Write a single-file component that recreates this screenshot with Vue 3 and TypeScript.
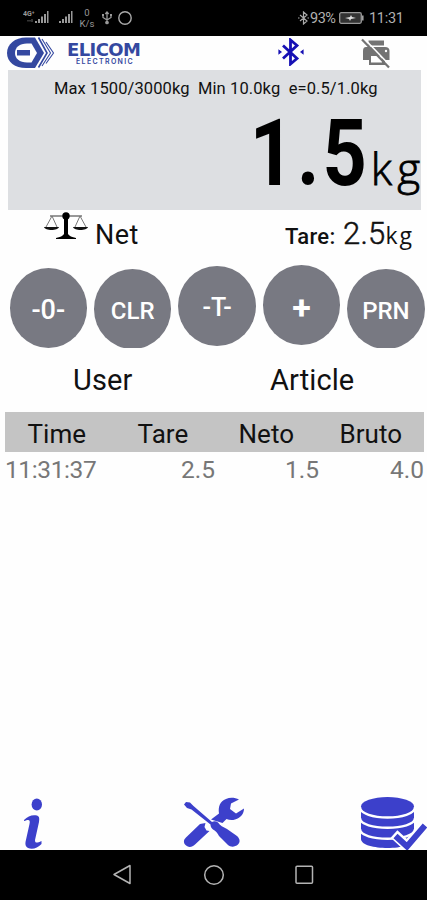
<script setup lang="ts">
interface Key { label: string; kind: string }
interface Weighing { time: string; tare: string; neto: string; bruto: string }

const keys: Key[] = [
  { label: '-0-', kind: 'zero' },
  { label: 'CLR', kind: 'clear' },
  { label: '-T-', kind: 'minus-tare' },
  { label: '+', kind: 'plus' },
  { label: 'PRN', kind: 'print' },
]
const columns: string[] = ['Time', 'Tare', 'Neto', 'Bruto']
const rows: Weighing[] = [{ time: '11:31:37', tare: '2.5', neto: '1.5', bruto: '4.0' }]
</script>

<template>
  <div class="screen">
    <div class="status">
      <svg class="signals" width="53" height="20" viewBox="0 0 53 20" fill="#999">
        <path d="M12 13h2v2h-2zM15 11h2v4h-2zM18 8.500h2V15h-2zM21 6h2v9h-2zM24 3h1.500v12H24z" />
        <path d="M36 13h2v2h-2zM39 11h2v4h-2zM42 8.500h2V15h-2zM45 6h2v9h-2zM48 3h1.500v12H48z" />
        <path d="M4 12h4v1.500H4zM8 11h2v3H8z" opacity=".35" />
        <text x="0" y="8" class="tiny">4G⁺</text>
      </svg>
      <div class="rate"><span>0</span><span>K/s</span></div>
      <svg class="usb" width="12" height="14" viewBox="0 0 12 14" fill="none" stroke="#999" stroke-width="1.300">
        <path d="M6 1v10M2 4v2.500l4 2.500 4-2.500V4M4.300 3L6 1l1.700 2" />
        <circle cx="6" cy="11.500" r="1.200" fill="#999" /><path d="M1 4h2M9 4h2" stroke-width="2" />
      </svg>
      <svg class="ring" width="16" height="16" viewBox="0 0 16 16"><circle cx="8" cy="8" r="6.200" fill="none" stroke="#aaa" stroke-width="1.400" /></svg>
      <svg class="bt-small" width="11" height="14" viewBox="0 0 11 14" fill="none" stroke="#aaa" stroke-width="1.200">
        <path d="M2 4l7 6-3.500 3V1L9 4l-7 6M0 7h1.500M9.500 7H11" />
      </svg>
      <span class="percent">93%</span>
      <svg class="battery" width="26" height="12" viewBox="0 0 26 12">
        <rect x=".7" y=".7" width="21.600" height="10.600" rx="1.500" fill="#333" stroke="#999" stroke-width="1.300" />
        <path d="M23.800 3.500v5" stroke="#aaa" stroke-width="1.500" />
        <path d="M6 6l5-1 1-2 1 2 4 1-5 1-1 2-1-2z" fill="#ddd" />
      </svg>
      <span class="clock">11:31</span>
    </div>

    <header class="brand">
      <svg class="mark" width="49" height="34" viewBox="0 0 49 34" fill="none" stroke="#3448a0">
        <path d="M28 1.500H19C8 1.500 0 8 0 17s8 15 19 15h9l9-15z" fill="#3448a0" stroke="none" />
        <path d="M24.500 7.500H20c-7.500 0-12 4-12 9.500s4.500 9.500 12 9.500h4.500L30 17z" fill="#fefefe" stroke="none" />
        <path d="M10 14h13v5.500H10z" fill="#3448a0" stroke="none" />
        <path d="M31.500 1.500L40 17l-8.500 14.500" stroke-width="1.600" />
        <path d="M35 3l8.500 14L35 30M39 6l7.500 11L39 27.500" stroke-width="1.100" />
      </svg>
      <div class="wordmark"><span class="name">ELICOM</span><span class="sub">ELECTRONIC</span></div>
      <svg class="bluetooth" width="26" height="28" viewBox="0 0 26 28" fill="none" stroke="#1610b4" stroke-width="2.800">
        <path d="M5 7.500l14 13-6.500 5.500V2L19 7.500l-14 13" /><path d="M1 12.500l2 1.500-2 1.500zM25 12.500L23 14l2 1.500z" fill="#1610b4" stroke-width="1.200" />
      </svg>
      <svg class="printer" width="32" height="32" viewBox="0 0 32 32">
        <path d="M8.500 2.500H24V7.500H8.500zM6 9h19c3 0 4.500 1.500 4.500 4v9H25v5H9v-5H3v-9c0-2.500 1-4 3-4z" fill="#737373" />
        <path d="M11 18h11v6.500H11z" fill="#fff" /><circle cx="26" cy="13" r="1.200" fill="#fff" />
        <path d="M4 .5l26 27" stroke="#fff" stroke-width="1.600" /><path d="M2 1.500l27 28" stroke="#737373" stroke-width="2.200" />
      </svg>
    </header>

    <section class="display">
      <div class="limits">Max 1500/3000kg&nbsp; Min 10.0kg&nbsp; e=0.5/1.0kg</div>
      <div class="weight"><span class="value">1.5</span><span class="unit">kg</span></div>
    </section>

    <section class="mode">
      <svg class="scales" width="44" height="28" viewBox="0 0 44 28" fill="none" stroke="#777" stroke-width="1">
        <path d="M6 4h32" stroke="#333" /><path d="M8 4L2 15M8 4l5 11M36 4l-5 11M36 4l6 11" />
        <path d="M0 15h15c-1 4-14 4-15 0zM29 15h15c-1 4-14 4-15 0z" fill="#111" stroke="none" />
        <circle cx="22" cy="4" r="3.700" fill="#000" stroke="none" />
        <path d="M20 5h4v17c1 2 4 3 8 4v1H12v-1c4-1 7-2 8-4z" fill="#000" stroke="none" />
      </svg>
      <span class="net">Net</span>
      <span class="tare-label">Tare:</span><span class="tare-value">2.5</span><span class="tare-unit">kg</span>
    </section>

    <section class="keys">
      <button v-for="key in keys" :key="key.kind" class="key" :class="key.kind">{{ key.label }}</button>
    </section>

    <section class="pickers"><span class="user">User</span><span class="article">Article</span></section>

    <div class="table-head"><span v-for="column in columns" :key="column">{{ column }}</span></div>
    <div v-for="row in rows" :key="row.time" class="record">
      <span class="time">{{ row.time }}</span><span>{{ row.tare }}</span><span>{{ row.neto }}</span><span>{{ row.bruto }}</span>
    </div>

    <footer class="tools">
      <svg class="info" width="22" height="54" viewBox="0 0 22 54" fill="#3c40cb">
        <ellipse cx="13.800" cy="8.500" rx="5.200" ry="6" />
        <path d="M1 24c4-4 8-5.500 13-4.500 2.500 1 2.500 3 2 6.500l-4 18c0 3.500 2 3 6.500 1v3c-4 4-9 6-13.500 4-2-1-3-3-2.500-6l4-18c1-4.500-.5-5-5.500-3z" />
      </svg>
      <svg class="repair" width="64" height="54" viewBox="0 0 64 54" fill="#3c40cb">
        <path d="M1 8.500L3 6l4 .5L10.500 10 29 26c2-1 4-1 6 .5 2 3 5 4.500 9 6.500l10 7c3 3 3.500 6 1 8.500-3 2.500-7 3-10 .5L36 40c-1.500-3-3-5-6-6.500-2-2-2.500-3-2.500-5L8.500 13.500 4 12z" />
        <path d="M22.500 27l-1 4 2 3.500 3 .5L12 48.500c-3 3-7 3.500-10 0-2-3-1-5.500 2-8L17 28z" />
        <path d="M28 23.500l8-6c-1-7 1-12 7-14.500 4-2 9-1.500 13 .5l-8 4-1 5.500 6 4.500 8-5c0 5-3 9-9 11-3 1-6 .5-8.500-.5l-4 4z" />
      </svg>
      <svg class="database" width="68" height="54" viewBox="0 0 68 54">
        <path d="M1 11v32c0 12 53 12 53 0V11z" fill="#3c40cb" />
        <ellipse cx="27.500" cy="10.500" rx="26.500" ry="9.500" fill="#3c40cb" />
        <path d="M0 11c0 14 55 14 55 0M0 22c0 13 55 13 55 0M0 33c0 13 55 13 55 0" fill="none" stroke="#fff" stroke-width="2.400" />
        <path d="M34 38l13 12 18-21" fill="none" stroke="#fff" stroke-width="10" /><path d="M35.500 40l11.500 10.500L65 29.500" fill="none" stroke="#3c40cb" stroke-width="6" />
      </svg>
    </footer>

    <nav class="system">
      <svg width="20" height="22" viewBox="0 0 20 22"><path d="M18 1.500v18L2 10.500z" fill="none" stroke="#b4b4b4" stroke-width="1.500" stroke-linejoin="round" /></svg>
      <svg width="22" height="22" viewBox="0 0 22 22"><circle cx="11" cy="11" r="9.300" fill="none" stroke="#b4b4b4" stroke-width="1.500" /></svg>
      <svg width="20" height="22" viewBox="0 0 20 22"><rect x="1" y="2.300" width="16.500" height="17" rx="1" fill="none" stroke="#b4b4b4" stroke-width="1.500" /></svg>
    </nav>
  </div>
</template>

<style>
body { background: #fefefe; }
</style>

<style scoped>
.screen { width: 427px; height: 900px; display: flex; flex-direction: column; overflow: hidden; background: #fefefe; color: #111; font-family: Roboto, sans-serif; }
svg { flex: none; display: block; }
span { white-space: nowrap; }
.status { height: 36px; flex: none; background: #000; color: #b0b0b0; display: flex; align-items: center; }
.signals { margin-left: 23px; }
.tiny { font: bold 7px Roboto, sans-serif; }
.rate { width: 16px; margin-left: 3px; display: flex; flex-direction: column; align-items: center; font-size: 9.500px; line-height: 11px; color: #999; }
.usb { margin-left: 6px; }
.ring { margin-left: 4px; }
.bt-small { margin-left: 165px; }
.percent { width: 28px; margin-left: 1px; font-size: 14.500px; letter-spacing: -.5px; }
.battery { margin-left: 1px; }
.clock { margin-left: 4px; font-size: 14.500px; letter-spacing: -.3px; }
.brand { height: 34px; flex: none; display: flex; align-items: center; }
.mark { margin-left: 7px; }
.wordmark { width: 74px; margin-left: 11px; display: flex; flex-direction: column; color: #3448a0; }
.name { font: bold 18px/17px "DejaVu Sans", sans-serif; letter-spacing: -.6px; }
.sub { margin-left: 9px; font: 7px/8px Inter, sans-serif; font-weight: 600; letter-spacing: 1.350px; }
.bluetooth { margin-left: 137px; margin-top: -2px; }
.printer { margin-left: 56px; margin-top: 2px; }
.display { width: 413px; height: 140px; flex: none; margin-left: 8px; background: #dddfe2; }
.limits { padding: 9px 0 0 46px; font-size: 16.500px; line-height: 20px; letter-spacing: .1px; white-space: nowrap; }
.weight { display: flex; justify-content: flex-end; align-items: baseline; height: 110px; line-height: 110px; color: #000; }
.value { font-size: 92px; font-weight: 700; letter-spacing: 3.500px; margin-right: 2px; transform: scaleX(.84); transform-origin: right; }
.unit { font-family: "Open Sans", sans-serif; font-weight: 300; -webkit-text-stroke: .8px #000; font-size: 44px; margin-left: -1px; letter-spacing: 5px; margin-right: -4px; }
.mode { height: 48px; flex: none; display: flex; align-items: baseline; padding-left: 44px; line-height: 48px; }
.scales { align-self: flex-start; margin-top: 2px; }
.net { width: 190px; margin-left: 7px; font-size: 27px; letter-spacing: .5px; }
.tare-label { width: 51px; font-size: 22px; font-weight: 500; letter-spacing: .3px; }
.tare-value { margin-left: 7px; font-size: 31px; font-weight: 300; -webkit-text-stroke: .5px #111; letter-spacing: .2px; }
.tare-unit { font: 23px "Open Sans", sans-serif; letter-spacing: 2px; }
.keys { height: 90px; flex: none; display: flex; gap: 6.800px; padding: 0 0 0 9.500px; overflow: hidden; }
.key { width: 77.600px; height: 80px; flex: none; padding: 3px 0 0; border: 0; border-radius: 50%; background: #787982; color: #fff; font: 500 24px Roboto, sans-serif; }
.zero { margin-top: 10px; font-size: 27px; }
.clear, .print { margin-top: 11px; }
.minus-tare { margin-top: 8px; font-size: 25px; }
.plus { margin-top: 7px; padding-top: 4px; font-size: 34px; font-weight: 700; }
.pickers { height: 64px; flex: none; display: flex; line-height: 65px; font-size: 29px; padding-left: 73px; letter-spacing: .1px; }
.user { width: 197px; }
.table-head { width: 419.500px; height: 40px; flex: none; margin-left: 4.500px; background: #c4c4c4; display: grid; grid-template-columns: 110px 101px 101px 1fr; padding-left: 23px; box-sizing: border-box; line-height: 44px; font-size: 26px; letter-spacing: .05px; }
.record { height: 36px; flex: none; display: grid; grid-template-columns: 110px 100px 104px 105px; margin-left: 5px; font-size: 24.500px; line-height: 36px; color: #777; }
.record span + span { text-align: right; }
.time { letter-spacing: -.4px; }
.tools { height: 54px; flex: none; margin-top: auto; display: flex; }
.info { margin-left: 23px; }
.repair { margin-left: 138px; }
.database { margin-left: 113px; }
.system { height: 50px; flex: none; background: #000; display: flex; justify-content: space-between; align-items: center; padding: 0 112px; }
</style>
